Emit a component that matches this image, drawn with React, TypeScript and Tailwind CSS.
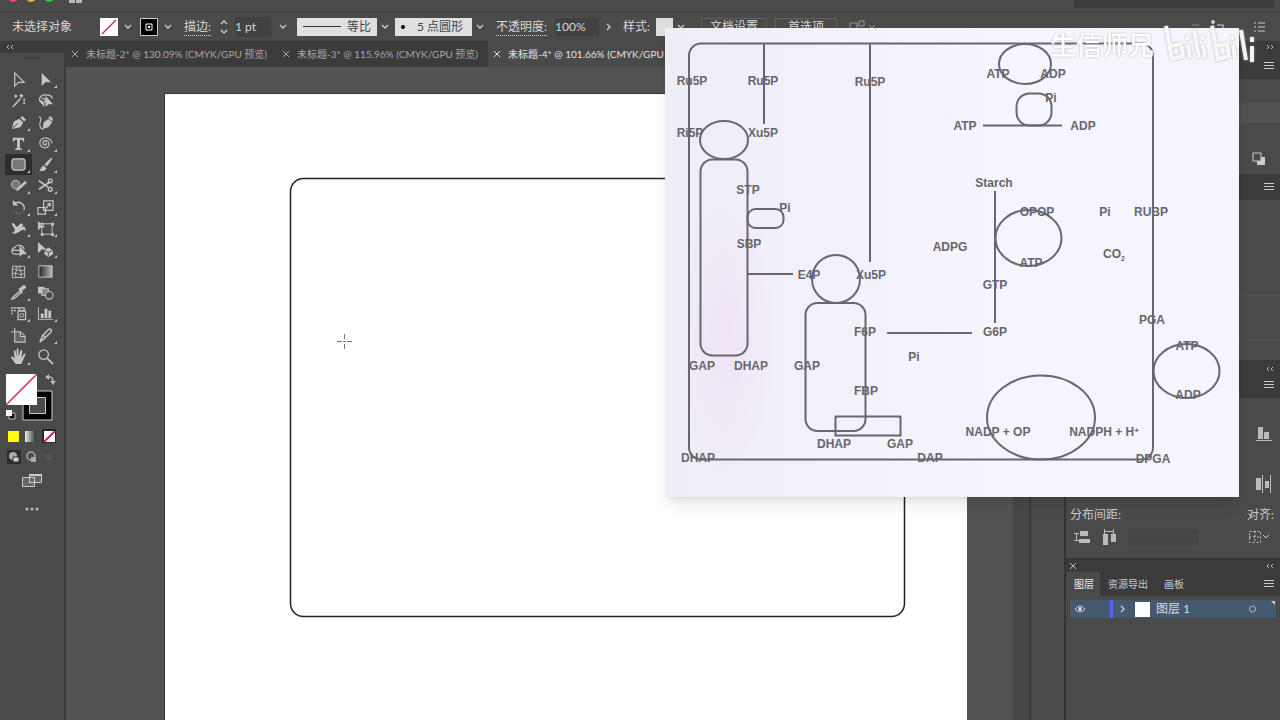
import type { ReactNode } from 'react'

const tools: { name: string; sub?: boolean; icon: ReactNode }[] = [
  { name: '选择工具', icon: <path d="M5 2v14l4-4h6z" fill="none" stroke="currentColor" strokeWidth="1.3" /> },
  { name: '直接选择工具', sub: true, icon: <path d="M5 2v14l4-4h6z" fill="currentColor" /> },
  { name: '魔棒工具', icon: <path d="M3 16 11 7M12 2v4M10 4h4M15 7v3M6 3v3M4.500 4.500h3M14 12h2" stroke="currentColor" strokeWidth="1.600" fill="none" /> },
  { name: '套索工具', icon: <><path d="M5 11c-4-1-3-8 4-8 5 0 7 2 7 4M5 7c3-1 5 2 3 4s-4 1-4-1 3 1 3 5" fill="none" stroke="currentColor" strokeWidth="1.400" /><path d="M9 4v12l3-3h5z" fill="currentColor" /></> },
  { name: '钢笔工具', sub: true, icon: <><path d="M2 16 4 8l6-3 4 4-3 5z M11 4l2-2 4 4-2 2z" fill="currentColor" /><path d="m3 15 5-5" stroke="#4a4a4a" /></> },
  { name: '曲率工具', icon: <><path d="m6 16 1-7 5-4 4 4-4 5z M12 4l2-2 3 3-1 3z" fill="currentColor" /><path d="M2 3c4 1 1 5 1 8s1 5 4 5" fill="none" stroke="currentColor" strokeWidth="1.200" /></> },
  { name: '文字工具', sub: true, icon: <path d="M3 3h12v4h-1.500L13 5h-2.500v9l2 .5V16h-7v-1.500l2-.5V5H5l-.500 2H3z" fill="currentColor" /> },
  { name: '螺旋线工具', sub: true, icon: <path d="M9 9c1-1 2 1 0 1.500-3 1-4-4 0-4.500 5 0 5 7 0 7.500C1 14 1 3 9 3c4 0 7 3 7 6" fill="none" stroke="currentColor" strokeWidth="1.300" /> },
  { name: '圆角矩形工具', sub: true, icon: <rect x="2" y="3" width="14" height="12" rx="3" fill="#777" stroke="currentColor" strokeWidth="1.300" /> },
  { name: '画笔工具', sub: true, icon: <path d="M16 2c1 1-5 8-6 9L8 9c1-1 7-8 8-7zM7 10l3 3c-1 3-5 3-8 3 2-1 2-5 5-6z" fill="currentColor" /> },
  { name: '斑点画笔工具', sub: true, icon: <><circle cx="6" cy="8" r="4.500" fill="#777" stroke="currentColor" /><path d="M16 4 8 12l-2 3 3-1 9-8z" fill="currentColor" /></> },
  { name: '剪刀工具', sub: true, icon: <><path d="m2 4 10 7M2 13l12-8" stroke="currentColor" strokeWidth="1.800" /><circle cx="14" cy="4" r="2" fill="none" stroke="currentColor" strokeWidth="1.500" /><circle cx="14" cy="13" r="2" fill="none" stroke="currentColor" strokeWidth="1.500" /></> },
  { name: '旋转工具', sub: true, icon: <><path d="M4 5c6-4 12 1 11 6" fill="none" stroke="currentColor" strokeWidth="1.500" /><path d="M3 1v6h6z" fill="currentColor" /><path d="M15 11c-1 4-7 6-11 2" fill="none" stroke="currentColor" strokeDasharray="1 2" /></> },
  { name: '比例缩放工具', sub: true, icon: <path d="M7 2h10v10H7zM1 9h8v7H1zM9 10l5-5m-3 0h3v3" fill="none" stroke="currentColor" strokeWidth="1.300" /> },
  { name: '宽度工具', sub: true, icon: <path d="M2 3c5 1 3 5 6 4 2-1 2-4 5-3 2 1 0 3-2 4 5-3 6 1 5 4-2-4-5 0-7 1-3 2-6 2-7 0 3 1 4-3 2-5-1-1-2-3-2-5z M3 14l4-6" fill="currentColor" /> },
  { name: '自由变换工具', sub: true, icon: <><path d="M5 4h11v11H5z" fill="none" stroke="currentColor" /><path d="M4 3h3v3H4zM15 3h3v3h-3zM4 14h3v3H4zM15 14h3v3h-3zM1 1v10l3-3h5z" fill="currentColor" /></> },
  { name: '形状生成器工具', sub: true, icon: <><path d="M10 14H5c-4 0-4-6 0-7 2-4 9-3 10 2M3 10h7" fill="none" stroke="currentColor" strokeWidth="1.300" /><path d="M10 5v12l3-3h5z" fill="currentColor" /></> },
  { name: '实时上色工具', sub: true, icon: <><path d="M1 1v12l4-4h5z" fill="currentColor" /><path d="m12 7 5 3v4l-5 3-4-3v-4z" fill="currentColor" /><path d="m8 10 4 2 5-2m-5 2v4" stroke="#4a4a4a" fill="none" /></> },
  { name: '网格工具', icon: <path d="M2.500 3.500h13v12h-13zM2 7c5-3 8 4 13 0M2 12c5-4 8 3 13-1M6 3c5 3-4 8 1 12M12 3c-5 3 3 8-1 12" fill="none" stroke="currentColor" /> },
  { name: '渐变工具', icon: <><defs><linearGradient id="toolGradient"><stop stopColor="#222" /><stop offset="1" stopColor="#bbb" /></linearGradient></defs><rect x="2" y="3" width="14" height="12" fill="url(#toolGradient)" stroke="currentColor" /></> },
  { name: '吸管工具', sub: true, icon: <><path d="m11 7-8 7-1 2 3-1 8-7" fill="none" stroke="currentColor" strokeWidth="1.400" /><path d="m9 5 2-1 3-3c2 0 3 1 3 3l-4 3v3h-1z" fill="currentColor" /></> },
  { name: '混合工具', icon: <><path d="M1 3h7v7H1z" fill="currentColor" /><rect x="5" y="5" width="7" height="7" fill="#888" stroke="currentColor" /><circle cx="13" cy="12" r="4" fill="#4a4a4a" stroke="currentColor" strokeWidth="1.200" /></> },
  { name: '符号喷枪工具', sub: true, icon: <><path d="M8.500 6.500h8v9h-8zM10 3h5v3h-5z" fill="none" stroke="currentColor" strokeWidth="1.300" /><circle cx="12.500" cy="11" r="2" fill="none" stroke="currentColor" /><path d="M1 3h2M4 3h2M7 3h2M1 6h2M4 6h2M1 9h2" stroke="currentColor" strokeWidth="1.800" /></> },
  { name: '柱形图工具', sub: true, icon: <path d="M1 2h1v13h15v1H1zM4 9h3v5H4zM8 4h3v10H8zM12 6h3v8h-3z" fill="currentColor" /> },
  { name: '画板工具', icon: <path d="M5 1v15M1 5h10l5 5v6H5V5M11 5v5h5" fill="#666" stroke="currentColor" strokeWidth="1.200" /> },
  { name: '切片工具', sub: true, icon: <path d="m3 16 3-7 6-6c2-2 4 0 3 2l-6 6zM7 9l2 2" fill="none" stroke="currentColor" strokeWidth="1.500" /> },
  { name: '抓手工具', sub: true, icon: <path d="M6 17 1 10c0-2 2-1 4 1L4 4c0-2 2-2 2 0l1 5V2c0-2 2-2 2 0v7l2-6c1-2 2-1 2 1l-1 6 3-4c1-1 2 0 1 2l-4 9z" fill="currentColor" /> },
  { name: '缩放工具', icon: <><circle cx="7" cy="7" r="5" fill="none" stroke="currentColor" strokeWidth="1.400" /><path d="m11 11 6 6" stroke="currentColor" strokeWidth="2" /></> },
]

const labels: [string, number, number][] = [
  ['Ru5P', 692, 85], ['Ru5P', 763, 85], ['Ru5P', 870, 86], ['ATP', 998, 78], ['ADP', 1053, 78],
  ['Pi', 1051, 102], ['ATP', 965, 130], ['ADP', 1083, 130], ['Ri5P', 690, 137], ['Xu5P', 763, 137],
  ['STP', 748, 194], ['Pi', 785, 212], ['SBP', 749, 248], ['Starch', 994, 187], ['OPOP', 1037, 216],
  ['Pi', 1105, 216], ['RUBP', 1151, 216], ['ADPG', 950, 251], ['ATP', 1031, 267], ['E4P', 809, 279],
  ['Xu5P', 871, 279], ['GTP', 995, 289], ['PGA', 1152, 324], ['F6P', 865, 336], ['G6P', 995, 336],
  ['Pi', 914, 361], ['ATP', 1187, 350], ['GAP', 702, 370], ['DHAP', 751, 370], ['GAP', 807, 370],
  ['FBP', 866, 395], ['ADP', 1188, 399], ['NADP + OP', 998, 436], ['DHAP', 834, 448], ['GAP', 900, 448],
  ['DHAP', 698, 462], ['DAP', 930, 462], ['DPGA', 1153, 463],
]

function Chevron({ dir = 'down' }: { dir?: 'down' | 'right' }) {
  return (
    <svg width="8" height="8" viewBox="0 0 8 8" fill="none" stroke="#ccc" strokeWidth="1.300" className="shrink-0">
      <path d={dir === 'down' ? 'm1 2 3 3 3-3' : 'm2 1 3 3-3 3'} />
    </svg>
  )
}

function Collapse({ flip }: { flip?: boolean }) {
  return (
    <svg width="8" height="6" viewBox="0 0 8 6" fill="none" stroke="#bbb" strokeWidth="1">
      <path d={flip ? 'm1 1 2 2-2 2m4-4 2 2-2 2' : 'M3 1 1 3l2 2m4-4L5 3l2 2'} />
    </svg>
  )
}

function MenuIcon() {
  return (
    <svg width="10" height="8" viewBox="0 0 10 8" stroke="#ccc" strokeWidth="1">
      <path d="M0 .5h10M0 3.500h10M0 6.500h10" />
    </svg>
  )
}

function TitleBar() {
  return (
    <header className="flex h-3 shrink-0 overflow-hidden border-b border-[#404040] bg-[#4a4a4a]">
      <svg width="100" height="12" viewBox="0 0 100 12">
        <circle cx="13" cy="-3" r="5" fill="#ee4d62" />
        <circle cx="31" cy="-3" r="5" fill="#e9b93e" />
        <circle cx="49" cy="-3" r="5" fill="#2ecb4a" />
        <path d="M69-3h6v6h-6zM76-3h6v6h-6z" fill="#bbb" />
      </svg>
      <div className="ml-auto mr-1.5 h-2 w-50 bg-[#3d3d3d]" />
    </header>
  )
}

function ControlBar() {
  return (
    <div className="flex h-[29px] shrink-0 items-center overflow-hidden whitespace-nowrap bg-[#4a4a4a] pl-3 text-xs text-[#d8d8d8]">
      <span className="w-[88px] shrink-0">未选择对象</span>
      <button aria-label="填色" className="flex w-10 shrink-0 items-center gap-1.5">
        <svg width="18" height="18" viewBox="0 0 18 18"><path d="M0 0h18v18H0z" fill="#fff" /><path d="M2 16 16 2" stroke="#c4344c" strokeWidth="1.500" /></svg>
        <Chevron />
      </button>
      <button aria-label="描边颜色" className="flex w-11 shrink-0 items-center gap-1.5">
        <svg width="18" height="18" viewBox="0 0 18 18"><path d="M.5.500h17v17H.500z" stroke="#ccc" /><path d="M6 6h6v6H6z" fill="none" stroke="#fff" /><path d="M8 8h2v2H8z" fill="#fff" /></svg>
        <Chevron />
      </button>
      <label htmlFor="stroke" className="shrink-0 underline decoration-dotted underline-offset-4">描边:</label>
      <svg width="10" height="16" viewBox="0 0 10 16" fill="none" stroke="#ccc" strokeWidth="1.300" className="ml-2 mr-1.5 shrink-0"><path d="m2 5 3-3 3 3M2 11l3 3 3-3" /></svg>
      <input id="stroke" defaultValue="1 pt" className="h-5 w-9 shrink-0 bg-[#414141] text-xs" />
      <span className="ml-2 shrink-0"><Chevron /></span>
      <button className="ml-2.5 flex h-[18px] w-20 shrink-0 items-center gap-1.5 bg-[#e0e0e0] px-1.5 text-[#444]">
        <span className="h-px w-11 bg-[#333]" />等比
      </button>
      <span className="ml-1 shrink-0"><Chevron /></span>
      <button className="ml-1.5 flex h-[18px] w-[77px] shrink-0 items-center gap-3 bg-[#e0e0e0] px-1.5 text-[#444]">
        <span className="size-1 rounded-full bg-black" />5 点圆形
      </button>
      <span className="ml-1 shrink-0"><Chevron /></span>
      <label htmlFor="opacity" className="ml-3 shrink-0 underline decoration-dotted underline-offset-4">不透明度:</label>
      <input id="opacity" defaultValue="100%" className="ml-2 h-[18px] w-11 shrink-0 bg-[#414141]" />
      <span className="ml-1.5 shrink-0"><Chevron dir="right" /></span>
      <span className="ml-2.5 shrink-0">样式:</span>
      <button aria-label="样式" className="ml-1.5 flex shrink-0 items-center gap-1"><span className="h-[18px] w-[17px] bg-[#ddd]" /><Chevron /></button>
      <button className="ml-4 h-[18px] shrink-0 border border-[#606060] px-2">文档设置</button>
      <button className="ml-2 h-[18px] shrink-0 border border-[#606060] px-3">首选项</button>
      <svg width="30" height="14" viewBox="0 0 30 14" fill="none" stroke="#999" className="ml-3 shrink-0"><path d="M1 3h7v7H1zM10 1h5v5h-5zM20 5l3 3 3-3" /></svg>
      <svg width="90" height="16" viewBox="0 0 90 16" className="ml-auto mr-2 shrink-0"><circle cx="31" cy="3" r="2" fill="#ccc" /><path d="M31 6v5M35 6h6v4h-4" fill="none" stroke="#aaa" strokeWidth="1.500" /><path d="M10 6h7" stroke="#888" /><path d="M72 4h2M72 8h2M72 12h2M76 4h7M76 8h7M76 12h7" stroke="#ccc" /></svg>
    </div>
  )
}

function Toolbar() {
  return (
    <aside className="w-[66px] shrink-0 border-r-2 border-[#3b3b3b] bg-[#4a4a4a] text-[#c4c4c4]">
      <div className="flex h-3 items-center bg-[#3b3b3b] pl-1.5"><Collapse /></div>
      <div className="mx-auto mt-1 h-0.5 w-4 bg-[#3d3d3d]" />
      <div className="mt-2.5 grid h-[298px] grid-cols-[27px_27px] content-between pl-[5px]">
        {tools.map((tool) => (
          <button
            key={tool.name}
            aria-label={tool.name}
            className={`relative flex h-[21px] w-[27px] items-center justify-center ${tool.name === '圆角矩形工具' ? 'bg-[#2d2d2d]' : ''}`}
          >
            <svg width="17" height="17" viewBox="0 0 18 18">{tool.icon}</svg>
            {tool.sub && <svg width="3" height="3" viewBox="0 0 3 3" className="absolute bottom-0.5 right-0.5"><path d="M3 0v3H0z" fill="currentColor" /></svg>}
          </button>
        ))}
      </div>
      <svg width="64" height="152" viewBox="0 0 64 152" className="mt-1">
        <path d="M23 20h29v29H23z" fill="#000" stroke="#ccc" />
        <path d="M29.500 26.500h16v16h-16z" fill="#4a4a4a" stroke="#ccc" />
        <path d="M33 30h8v8h-8z" fill="#4a4a4a" />
        <path d="M6 3h31v31H6z" fill="#fff" />
        <path d="M6 34 37 3" stroke="#cc2942" strokeWidth="1.500" />
        <path d="M47 6h3q3 0 3 6" fill="none" stroke="#bbb" strokeWidth="1.500" />
        <path d="m45 6 4-3v6zM50 10h6l-3 4z" fill="#bbb" />
        <path d="M9 42h6v6H9z" fill="#111" stroke="#bbb" /><path d="M6 39h6v6H6z" fill="#fff" />
        <defs><linearGradient id="swatchGradient"><stop stopColor="#eee" /><stop offset="1" stopColor="#333" /></linearGradient></defs>
        <path d="M8 60h11v11H8z" fill="#ff0" /><path d="M25 60h11v11H25z" fill="url(#swatchGradient)" />
        <path d="M42 58h14v14H42z" fill="#252525" /><path d="M44 60h11v11H44z" fill="#fff" /><path d="m44 71 11-11" stroke="#cc2942" strokeWidth="2" />
        <path d="M7 79h14v14H7z" fill="#2d2d2d" />
        <circle cx="13" cy="85" r="4" fill="#aaa" /><path d="M13 86h6v5h-6z" fill="#ccc" stroke="#333" />
        <circle cx="31" cy="85" r="4" fill="none" stroke="#aaa" strokeWidth="1.500" /><path d="M31 86h5v5h-5z" fill="#aaa" />
        <circle cx="49" cy="86" r="3" fill="#565656" />
        <path d="M22.500 106.500h12v9h-12zM29.500 103.500h12v8h-12z" fill="#666" stroke="#ccc" />
        <path d="M29 103h13v2H29z" fill="#ccc" />
        <circle cx="27" cy="138" r="1.500" fill="#bbb" /><circle cx="32" cy="138" r="1.500" fill="#bbb" /><circle cx="37" cy="138" r="1.500" fill="#bbb" />
      </svg>
    </aside>
  )
}

function DocumentTabs() {
  const tabs = ['未标题-2* @ 130.09% (CMYK/GPU 预览)', '未标题-3* @ 115.96% (CMYK/GPU 预览)', '未标题-4* @ 101.66% (CMYK/GPU 预览)']
  return (
    <nav className="flex h-[26px] shrink-0 overflow-hidden whitespace-nowrap bg-[#3b3b3b] text-[10px]">
      {tabs.map((tab, i) => (
        <button key={tab} className={`flex w-[211px] shrink-0 items-center gap-2 pl-1.5 ${i === 2 ? 'bg-[#4a4a4a] text-[#e2e2e2]' : 'text-[#a8a8a8]'}`}>
          <svg width="6" height="6" viewBox="0 0 6 6" stroke="currentColor" className="shrink-0"><path d="m0 0 6 6M0 6l6-6" /></svg>
          {tab}
        </button>
      ))}
    </nav>
  )
}

function Canvas() {
  return (
    <main className="flex min-h-0 min-w-0 flex-1 flex-col">
      <DocumentTabs />
      <div className="flex min-h-0 flex-1 bg-[#535353]">
        <div className="min-w-0 flex-1 pl-[98px] pr-[46px] pt-[26px]">
          <div className="h-full border-l border-t border-[#333] bg-white">
            <svg viewBox="165 94 802 626" className="w-full">
              <rect x="290.500" y="178.500" width="614" height="438" rx="13" fill="none" stroke="#222" strokeWidth="1.500" />
              <path d="M337 341.500h5M347 341.500h5M344.500 334v5M344.500 344v5M343 341.500h3" stroke="#777" />
            </svg>
          </div>
        </div>
        <div className="w-4 bg-[#474747]" />
      </div>
    </main>
  )
}

function PanelBar() {
  return <div className="flex h-[26px] shrink-0 items-center justify-end bg-[#3b3b3b] pr-1.5"><MenuIcon /></div>
}

function Panels() {
  return (
    <aside className="flex w-[216px] shrink-0 flex-col border-l-2 border-[#353535] bg-[#4a4a4a] text-[11px] text-[#ccc]">
      <div className="flex h-3 items-center justify-end bg-[#3b3b3b] pr-1.5"><Collapse flip /></div>
      <PanelBar />
      <div className="flex h-[95px] flex-col items-end justify-between pb-2 pt-6">
        <div className="h-5 w-full bg-[#525252]" />
        <svg width="14" height="14" viewBox="0 0 14 14" className="mr-3.5"><path d="M5 5h8v8H5z" fill="#ccc" /><path d="M1 1h8v8H1z" fill="#4a4a4a" stroke="#ccc" /></svg>
      </div>
      <PanelBar />
      <div className="flex h-[160px] flex-col justify-end pb-[19px]">
        <div className="h-[46px] border-y border-[#525252]" />
      </div>
      <div className="flex h-3 items-end justify-end bg-[#3b3b3b] pr-1.5"><Collapse /></div>
      <PanelBar />
      <div className="flex h-[107px] flex-col items-end justify-between pb-3 pr-2 pt-7">
        <svg width="16" height="16" viewBox="0 0 16 16" fill="#bbb"><path d="M2 1h5v12H2zM8 6h5v7H8zM0 14h16v1H0z" /></svg>
        <svg width="16" height="18" viewBox="0 0 16 18" fill="#bbb"><path d="M0 3h5v12H0zM6 0h1v18H6zM9 6h4v7H9zM14 0h1v18h-1z" /></svg>
      </div>
      <div className="flex h-[55px] flex-col gap-1.5 border-b-2 border-[#353535] pt-0.5">
        <div className="flex justify-between pl-1 pr-1.5 text-xs"><span>分布间距:</span><span>对齐:</span></div>
        <div className="flex items-center gap-3 pl-2 pr-2.5">
          <svg width="16" height="14" viewBox="0 0 16 14" fill="#bbb"><path d="M6 1h8v5H6zM5 9h11v4H5zM2 3h1v8H2zM0 3h5v1H0zM0 10h5v1H0z" /></svg>
          <svg width="14" height="16" viewBox="0 0 14 16" fill="#bbb"><path d="M1 5h5v11H1zM9 5h5v8H9zM3 2h8v1H3zM2 0h1v5H2zM11 0h1v5h-1z" /></svg>
          <input aria-label="分布间距" disabled className="h-4 w-[70px] bg-[#454545]" />
          <svg width="22" height="14" viewBox="0 0 22 14" fill="none" stroke="#ccc" className="ml-auto"><path d="M1.500 1.500h11v11h-11zM7 1v12M1 7h12" strokeDasharray="2 2" /><path d="m15 5 3 3 3-3" /></svg>
        </div>
      </div>
      <div className="flex h-3 items-center justify-between bg-[#3b3b3b] pl-1 pr-1.5">
        <svg width="6" height="6" viewBox="0 0 6 6" stroke="#bbb"><path d="m0 0 6 6M0 6l6-6" /></svg>
        <Collapse />
      </div>
      <div className="flex h-6 items-center bg-[#3b3b3b] pr-1.5 text-[10px]">
        <button className="h-full w-[34px] bg-[#4a4a4a] pl-2 text-left text-[#eee]">图层</button>
        <button className="w-14">资源导出</button>
        <button className="w-9">画板</button>
        <span className="ml-auto"><MenuIcon /></span>
      </div>
      <div className="ml-1 mr-1 mt-1 flex h-[18px] items-center bg-[#455a70] text-xs text-[#ddd]">
        <svg width="12" height="8" viewBox="0 0 12 8" className="ml-1"><path d="M1 4q5-6 10 0-5 6-10 0z" fill="none" stroke="#ccc" /><circle cx="6" cy="4" r="2" fill="#ccc" /></svg>
        <span className="ml-6 mr-1.5 h-full w-[3px] bg-[#5669e8]" />
        <Chevron dir="right" />
        <span className="mx-1.5 ml-2 size-[15px] bg-white" />
        图层 1
        <svg width="27" height="18" viewBox="0 0 27 18" className="ml-auto"><circle cx="3.500" cy="9" r="3" fill="none" stroke="#bbb" /><path d="M22 1h4v4z" fill="#ccc" /></svg>
      </div>
    </aside>
  )
}

function ReferenceDiagram() {
  return (
    <figure className="absolute right-[41px] top-7 shadow-lg">
      <svg width="574" height="469" viewBox="665 28 574 469" className="font-['Liberation_Sans',sans-serif]">
        <defs>
          <radialGradient id="pinkTint"><stop stopColor="#f0e4f6" /><stop offset="1" stopColor="#f0e4f6" stopOpacity="0" /></radialGradient>
          <linearGradient id="paper"><stop stopColor="#efedf5" /><stop offset=".6" stopColor="#f6f4fc" /></linearGradient>
        </defs>
        <path d="M665 28h574v469H665z" fill="url(#paper)" />
        <ellipse cx="726" cy="340" rx="50" ry="140" fill="url(#pinkTint)" />
        <g fill="none" stroke="#68666e" strokeWidth="2">
          <rect x="689" y="43.500" width="464" height="416" rx="12" />
          <path d="M764 43v81M870 43v219M983 125.500h79M748 274h45M887 333h85M995 191v132" />
          <ellipse cx="724" cy="140" rx="24" ry="19" />
          <rect x="700.500" y="159.500" width="47" height="196" rx="12" />
          <rect x="747.500" y="209" width="36" height="19" rx="8" />
          <circle cx="836" cy="279" r="24" />
          <rect x="805.500" y="303" width="60" height="128" rx="12" />
          <path d="M835.500 416.500h65v19h-65z" />
          <ellipse cx="1025" cy="64" rx="26" ry="20" />
          <rect x="1016.500" y="93.500" width="35" height="32" rx="13" />
          <ellipse cx="1028.500" cy="238" rx="33" ry="28" />
          <ellipse cx="1041" cy="417.500" rx="54" ry="42" />
          <ellipse cx="1186.500" cy="371" rx="33" ry="27" />
        </g>
        <g fill="#68666e" fontSize="12" fontWeight="bold" textAnchor="middle">
          {labels.map(([text, x, y]) => <text key={`${text}-${x}-${y}`} x={x} y={y}>{text}</text>)}
          <text x="1114" y="258">CO<tspan fontSize="7" dy="3">2</tspan></text>
          <text x="1104" y="436">NADPH + H<tspan fontSize="8" dy="-3">+</tspan></text>
        </g>
      </svg>
    </figure>
  )
}

function Watermark() {
  return (
    <div className="absolute right-6 top-6 flex items-center gap-2 text-white">
      <span className="text-[26px] font-medium drop-shadow-[0_0_1px_#bbb]">生信师兄</span>
      <svg width="94" height="42" viewBox="0 0 94 42" fill="none" stroke="#fff" strokeOpacity=".9" strokeWidth="4" className="drop-shadow-[0_0_1px_#aaa]">
        <path d="m4 2 6 33 11-3-2-12-11 2M26 21l2 13M25 12l1 4M32 6l5 28M41 21l2 13M40 12l1 4M50 2l6 33 11-3-2-12-11 2M71 21l2 13M70 12l1 4M79 6l5 30M90 13v5M90 22v16" />
      </svg>
    </div>
  )
}

export default function App() {
  return (
    <div className="relative flex h-screen flex-col overflow-hidden bg-[#3b3b3b] font-['Lato','Noto_Sans_CJK_SC',sans-serif]">
      <TitleBar />
      <ControlBar />
      <div className="flex min-h-0 flex-1">
        <Toolbar />
        <Canvas />
        <div className="w-[35px] shrink-0 border-l-2 border-[#3b3b3b] bg-[#4a4a4a]" />
        <Panels />
      </div>
      <ReferenceDiagram />
      <Watermark />
    </div>
  )
}
